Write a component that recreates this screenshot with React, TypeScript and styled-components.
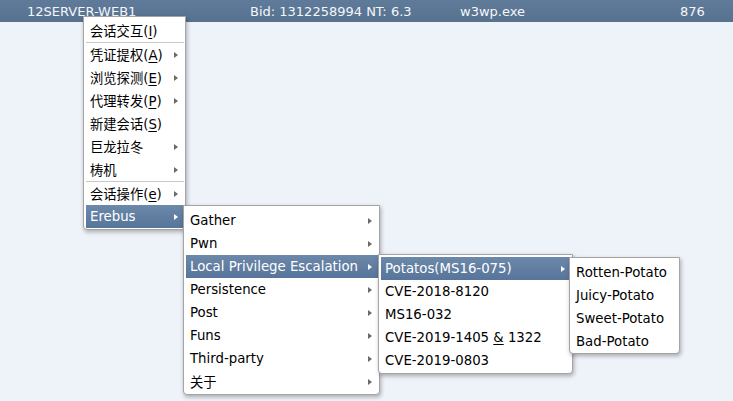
import React from "react";
import styled, { createGlobalStyle } from "styled-components";

const GlobalStyle = createGlobalStyle`
  html, body { margin: 0; padding: 0; }
  body {
    background: #eef2f9;
    font-family: "DejaVu Sans", "Noto Sans CJK SC", sans-serif;
  }
`;

const Page = styled.div`
  position: relative;
  width: 733px;
  height: 401px;
  overflow: hidden;
  background: #eef2f9;
`;

const SessionRow = styled.div`
  display: flex;
  align-items: center;
  height: 22px;
  padding-left: 27px;
  background: linear-gradient(#5f7b9a, #57728f);
  color: #f4f6f9;
  font-size: 13px;
  white-space: pre;
`;

const Cell = styled.div<{ $w?: number }>`
  flex: none;
  width: ${(p) => (p.$w ? `${p.$w}px` : "auto")};
`;

const MenuPanel = styled.div<{ $w: number; $pt: number; $pb: number }>`
  position: absolute;
  z-index: 1;
  box-sizing: border-box;
  width: ${(p) => p.$w}px;
  padding: ${(p) => p.$pt}px 1px ${(p) => p.$pb}px 2px;
  background: #fff;
  border: 1px solid #a4a4a4;
  border-radius: 0 0 4px 4px;
  box-shadow: 1px 2px 4px rgba(0, 0, 0, 0.3);
`;

const RootMenu = styled(MenuPanel)`
  left: 83px;
  top: 16px;
`;

const SubMenu = styled(MenuPanel)<{ $dx: number; $dy: number }>`
  left: calc(100% + ${(p) => p.$dx}px);
  top: ${(p) => p.$dy}px;
`;

const Item = styled.div<{ $active?: boolean }>`
  position: relative;
  display: flex;
  align-items: center;
  height: 23px;
  padding-left: 4px;
  font-size: 13.3px;
  white-space: nowrap;
  color: ${(p) => (p.$active ? "#fff" : "#000")};
  background: ${(p) =>
    p.$active ? "linear-gradient(#6c89aa, #57749a)" : "transparent"};

  u {
    text-decoration: underline;
    text-underline-offset: 2px;
    text-decoration-thickness: 1px;
  }
`;

const Label = styled.span`
  flex: 1;
`;

const Arrow = styled.span<{ $active?: boolean }>`
  flex: none;
  width: 0;
  height: 0;
  margin-right: 6px;
  border-left: 4px solid ${(p) => (p.$active ? "#fff" : "#6a6a6a")};
  border-top: 3.5px solid transparent;
  border-bottom: 3.5px solid transparent;
`;

const Separator = styled.div`
  height: 1px;
  background: #c9c9c9;
`;

type EntryProps = {
  label: React.ReactNode;
  sub?: boolean;
  active?: boolean;
  children?: React.ReactNode;
};

const Entry = ({ label, sub, active, children }: EntryProps) => (
  <Item $active={active}>
    <Label>{label}</Label>
    {sub && <Arrow $active={active} />}
    {children}
  </Item>
);

export default function App() {
  return (
    <Page>
      <GlobalStyle />
      <SessionRow>
        <Cell $w={223}>12SERVER-WEB1</Cell>
        <Cell $w={210}>Bid: 1312258994 NT: 6.3</Cell>
        <Cell $w={220}>w3wp.exe</Cell>
        <Cell>876</Cell>
      </SessionRow>

      <RootMenu $w={103} $pt={2} $pb={1}>
        <Entry label={<>会话交互(<u>I</u>)</>} />
        <Separator />
        <Entry sub label={<>凭证提权(<u>A</u>)</>} />
        <Entry sub label={<>浏览探测(<u>E</u>)</>} />
        <Entry sub label={<>代理转发(<u>P</u>)</>} />
        <Entry label={<>新建会话(<u>S</u>)</>} />
        <Entry sub label="巨龙拉冬" />
        <Entry sub label="梼机" />
        <Separator />
        <Entry sub label={<>会话操作(<u>e</u>)</>} />
        <Entry sub active label="Erebus">
          <SubMenu $w={197} $pt={3} $pb={1} $dx={-1} $dy={0}>
            <Entry sub label="Gather" />
            <Entry sub label="Pwn" />
            <Entry sub active label="Local Privilege Escalation">
              <SubMenu $w={195} $pt={2} $pb={1} $dx={0} $dy={-1}>
                <Entry sub active label="Potatos(MS16-075)">
                  <SubMenu $w={111} $pt={3} $pb={0} $dx={-2} $dy={0}>
                    <Entry label="Rotten-Potato" />
                    <Entry label="Juicy-Potato" />
                    <Entry label="Sweet-Potato" />
                    <Entry label="Bad-Potato" />
                  </SubMenu>
                </Entry>
                <Entry label="CVE-2018-8120" />
                <Entry label="MS16-032" />
                <Entry label={<>CVE-2019-1405 <u>&amp;</u> 1322</>} />
                <Entry label="CVE-2019-0803" />
              </SubMenu>
            </Entry>
            <Entry sub label="Persistence" />
            <Entry sub label="Post" />
            <Entry sub label="Funs" />
            <Entry sub label="Third-party" />
            <Entry sub label="关于" />
          </SubMenu>
        </Entry>
      </RootMenu>
    </Page>
  );
}
